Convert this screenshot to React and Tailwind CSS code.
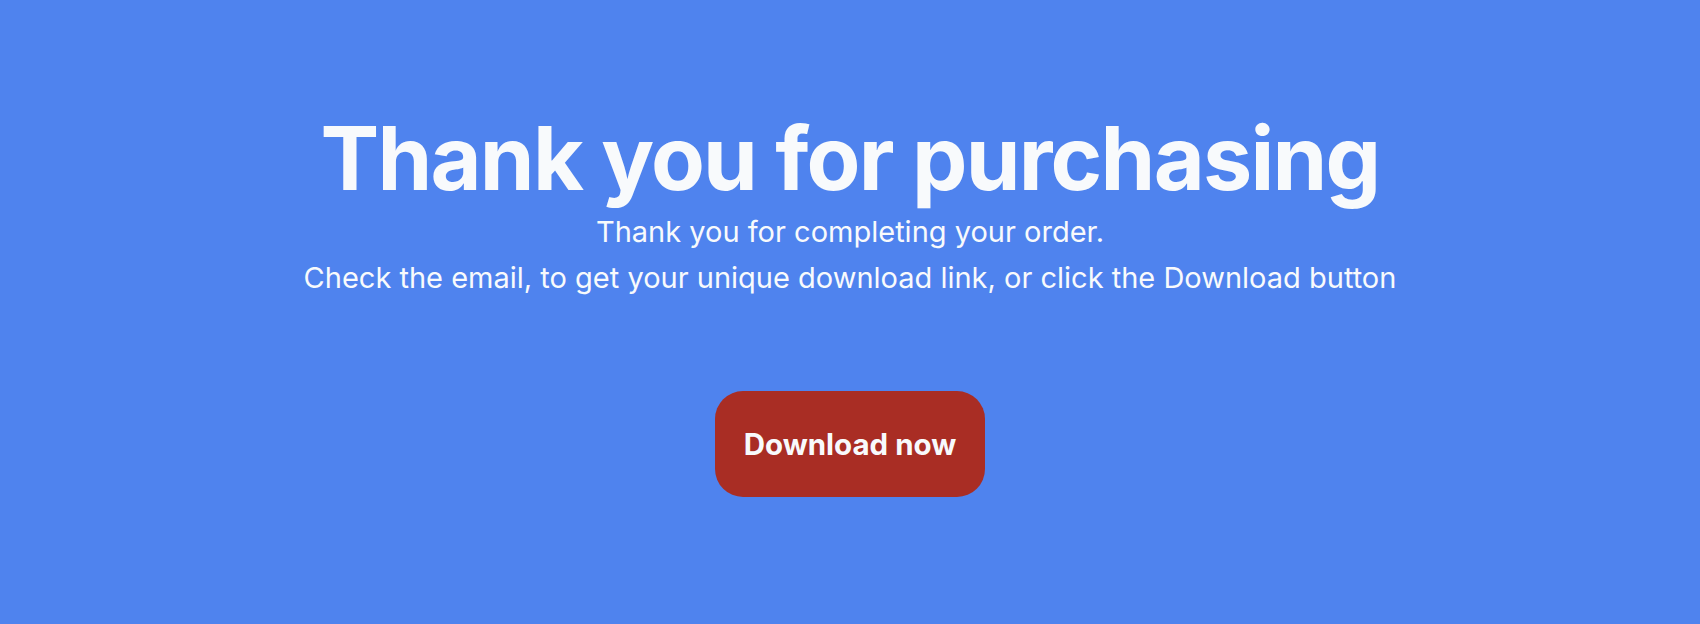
import React from 'react';

export default function App() {
  return (
    <div className="min-h-screen w-full bg-[#4f83ee] flex flex-col items-center pt-[110px] font-['Inter',sans-serif] text-[#f8fafc]">
      <h1 className="text-[88px] leading-[1.1] font-bold tracking-[-0.02em]">Thank you for purchasing</h1>
      <p className="text-[29px] leading-[46px] mt-0.5 text-center">
        Thank you for completing your order.
        <br />
        Check the email, to get your unique download link, or click the Download button
      </p>
      <button
        type="button"
        className="mt-[90px] h-[106px] px-[29px] rounded-[28px] bg-[#a92d24] text-[29.5px] font-bold text-[#f8fafc]"
      >
        Download now
      </button>
    </div>
  );
}
